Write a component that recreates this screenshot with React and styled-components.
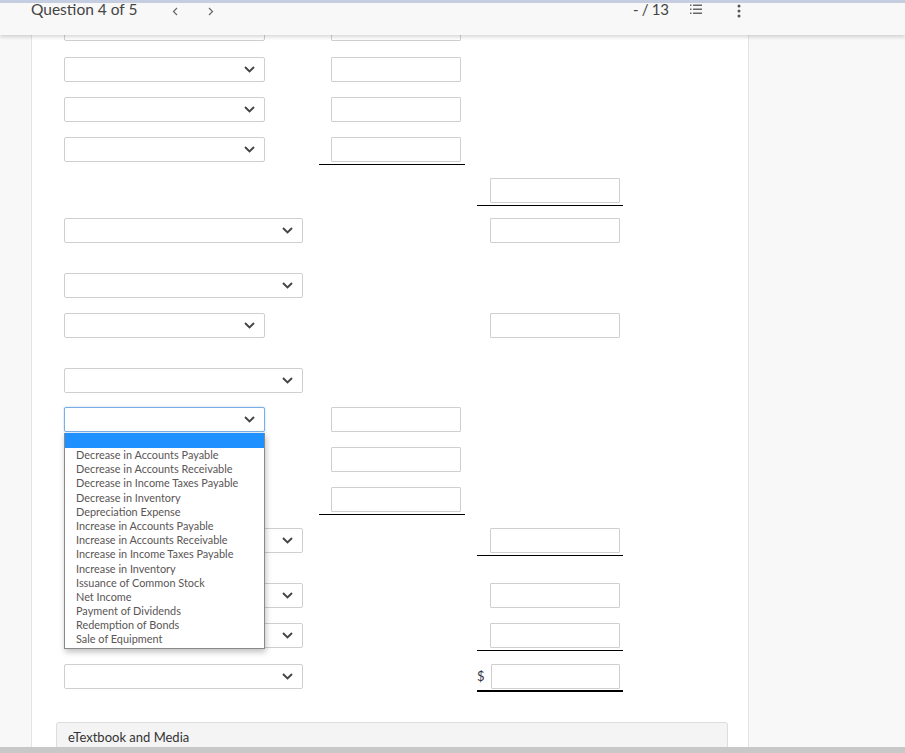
import React from 'react';
import styled, { createGlobalStyle } from 'styled-components';

const GlobalStyle = createGlobalStyle`
  html, body {
    margin: 0;
    padding: 0;
    background: #f8f8f8;
    font-family: Lato, "Open Sans", "Liberation Sans", sans-serif;
    overflow: hidden;
  }
`;

const Page = styled.div`
  width: 905px;
  height: 753px;
  position: relative;
  overflow: hidden;
  background: #f8f8f8;
`;

const Header = styled.header`
  position: absolute;
  top: 0;
  left: 0;
  right: 0;
  height: 32px;
  border-top: 3px solid #c5cee0;
  background: #f8f8f8;
  box-shadow: 0 2px 4px rgba(0, 0, 0, 0.16);
  display: flex;
  align-items: flex-start;
  padding: 0 0 0 31px;
  z-index: 5;
  color: #444;
`;

const QuestionLabel = styled.span`
  font-size: 15.5px;
  line-height: 12px;
`;

const NavButton = styled.span`
  display: inline-flex;
  margin-left: ${({ $gap }) => $gap}px;
  margin-top: 4px;
`;

const HeaderRight = styled.div`
  margin-left: auto;
  display: flex;
  align-items: flex-start;
  width: 272px;
`;

const Score = styled.span`
  font-size: 15px;
  line-height: 12px;
  color: #444;
  letter-spacing: -0.3px;
`;

const IconWrap = styled.span`
  display: inline-flex;
  margin-left: ${({ $gap }) => $gap}px;
  margin-top: 1px;
`;

const Panel = styled.main`
  position: absolute;
  top: 0;
  left: 31px;
  width: 718px;
  height: 747px;
  background: #fff;
  border-left: 1px solid #e4e4e4;
  border-right: 1px solid #e4e4e4;
  padding: 16px 0 0 32px;
  box-sizing: border-box;
`;

const Row = styled.div`
  display: grid;
  grid-template-columns: 255px 158px 146px;
  height: 25px;
  margin-top: ${({ $gap }) => $gap}px;
  position: relative;
`;

const SelectBox = styled.div`
  position: relative;
  box-sizing: border-box;
  width: ${({ $wide }) => ($wide ? 239 : 201)}px;
  height: 25px;
  border: 1px solid ${({ $focus }) => ($focus ? '#79aee6' : '#cfcfcf')};
  box-shadow: ${({ $focus }) => ($focus ? '0 0 2px rgba(80,150,230,0.5)' : 'none')};
  border-radius: 2px;
  background: #fff;
  display: flex;
  align-items: center;
  justify-content: flex-end;
  padding-right: 9px;
`;

const Cell = styled.div`
  box-sizing: border-box;
  width: 146px;
  height: ${({ $line }) => ($line ? 28 : 25)}px;
  padding: 0 ${({ $pr }) => $pr}px 0 0;
  border-bottom: ${({ $line }) => ($line ? `${$line}px solid #000` : 'none')};
  display: flex;
  align-items: flex-start;
  justify-content: flex-end;
`;

const Input = styled.div`
  box-sizing: border-box;
  width: 130px;
  height: 25px;
  border: 1px solid #cfcfcf;
  border-radius: 1px;
  background: #fff;
`;

const Dollar = styled.span`
  font-size: 13px;
  color: #334;
  line-height: 25px;
  margin-right: 6px;
`;

const Empty = styled.div``;

const DropList = styled.ul`
  position: absolute;
  top: 25px;
  left: -1px;
  width: 201px;
  box-sizing: border-box;
  margin: 0;
  padding: 0 0 1px;
  list-style: none;
  background: #fff;
  border: 1px solid #8a8a8a;
  border-top: none;
  box-shadow: 1px 3px 6px rgba(0, 0, 0, 0.25);
  z-index: 4;
`;

const Option = styled.li`
  height: ${({ $active }) => ($active ? 15 : 14.2)}px;
  line-height: 14.2px;
  font-size: 10.9px;
  color: #5a5656;
  padding-left: 11px;
  white-space: nowrap;
  background: ${({ $active }) => ($active ? '#1e90ff' : 'transparent')};
`;

const Media = styled.div`
  margin: 33px 0 0 -8px;
  width: 672px;
  height: 30px;
  box-sizing: border-box;
  background: #f4f4f4;
  border: 1px solid #dddddd;
  border-radius: 3px;
  padding: 6px 0 0 11px;
  font-size: 13px;
  color: #333;
`;

const BottomBar = styled.div`
  position: absolute;
  left: 0;
  right: 0;
  bottom: 0;
  height: 6px;
  background: #c8c8c8;
  z-index: 6;
`;

const Chevron = () => (
  <svg width="11" height="7" viewBox="0 0 11 7">
    <path d="M1 1l4.5 4.5L10 1" fill="none" stroke="#444" strokeWidth="1.9" />
  </svg>
);

const NavChevron = ({ dir }) => (
  <svg width="6" height="9" viewBox="0 0 6 9">
    <path
      d={dir === 'left' ? 'M5 1L1.5 4.5 5 8' : 'M1 1l3.5 3.5L1 8'}
      fill="none"
      stroke="#666"
      strokeWidth="1.2"
    />
  </svg>
);

const ListIcon = () => (
  <svg width="12" height="11" viewBox="0 0 12 11">
    <g fill="#666">
      <rect x="0" y="0.5" width="1.5" height="1.5" />
      <rect x="0" y="4.5" width="1.5" height="1.5" />
      <rect x="0" y="8.5" width="1.5" height="1.5" />
      <rect x="3" y="0.5" width="9" height="1.5" />
      <rect x="3" y="4.5" width="9" height="1.5" />
      <rect x="3" y="8.5" width="9" height="1.5" />
    </g>
  </svg>
);

const Kebab = () => (
  <svg width="4" height="14" viewBox="0 0 4 14">
    <g fill="#555">
      <circle cx="2" cy="2" r="1.5" />
      <circle cx="2" cy="7" r="1.5" />
      <circle cx="2" cy="12" r="1.5" />
    </g>
  </svg>
);

const options = [
  'Decrease in Accounts Payable',
  'Decrease in Accounts Receivable',
  'Decrease in Income Taxes Payable',
  'Decrease in Inventory',
  'Depreciation Expense',
  'Increase in Accounts Payable',
  'Increase in Accounts Receivable',
  'Increase in Income Taxes Payable',
  'Increase in Inventory',
  'Issuance of Common Stock',
  'Net Income',
  'Payment of Dividends',
  'Redemption of Bonds',
  'Sale of Equipment',
];

// sel: null | 'short' | 'wide'; c2/c3: input present; l2/l3: underline width
const rows = [
  { gap: 0, sel: 'short', c2: true },
  { gap: 16, sel: 'short', c2: true },
  { gap: 15, sel: 'short', c2: true },
  { gap: 15, sel: 'short', c2: true, l2: 1 },
  { gap: 16, c3: true, l3: 1 },
  { gap: 15, sel: 'wide', c3: true },
  { gap: 30, sel: 'wide' },
  { gap: 15, sel: 'short', c3: true },
  { gap: 30, sel: 'wide' },
  { gap: 14, sel: 'short', c2: true, open: true },
  { gap: 15, c2: true },
  { gap: 15, c2: true, l2: 1 },
  { gap: 16, sel: 'wide', c3: true, l3: 1 },
  { gap: 30, sel: 'wide', c3: true },
  { gap: 15, sel: 'wide', c3: true, l3: 1 },
  { gap: 16, sel: 'wide', c3: true, l3: 2, dollar: true },
];

export default function App() {
  return (
    <Page>
      <GlobalStyle />
      <Header>
        <QuestionLabel>Question 4 of 5</QuestionLabel>
        <NavButton $gap={35} aria-label="Previous"><NavChevron dir="left" /></NavButton>
        <NavButton $gap={30} aria-label="Next"><NavChevron dir="right" /></NavButton>
        <HeaderRight>
          <Score>- / 13</Score>
          <IconWrap $gap={21}><ListIcon /></IconWrap>
          <IconWrap $gap={35}><Kebab /></IconWrap>
        </HeaderRight>
      </Header>
      <Panel>
        {rows.map((r, i) => (
          <Row key={i} $gap={r.gap}>
            {r.sel ? (
              <SelectBox $wide={r.sel === 'wide'} $focus={r.open}>
                <Chevron />
                {r.open && (
                  <DropList>
                    <Option $active />
                    {options.map((o) => (
                      <Option key={o}>{o}</Option>
                    ))}
                  </DropList>
                )}
              </SelectBox>
            ) : (
              <Empty />
            )}
            {r.c2 ? (
              <Cell $pr={4} $line={r.l2}>
                <Input />
              </Cell>
            ) : (
              <Empty />
            )}
            {r.c3 ? (
              <Cell $pr={3} $line={r.l3}>
                {r.dollar && <Dollar>$</Dollar>}
                <Input />
              </Cell>
            ) : (
              <Empty />
            )}
          </Row>
        ))}
        <Media>eTextbook and Media</Media>
      </Panel>
      <BottomBar />
    </Page>
  );
}
